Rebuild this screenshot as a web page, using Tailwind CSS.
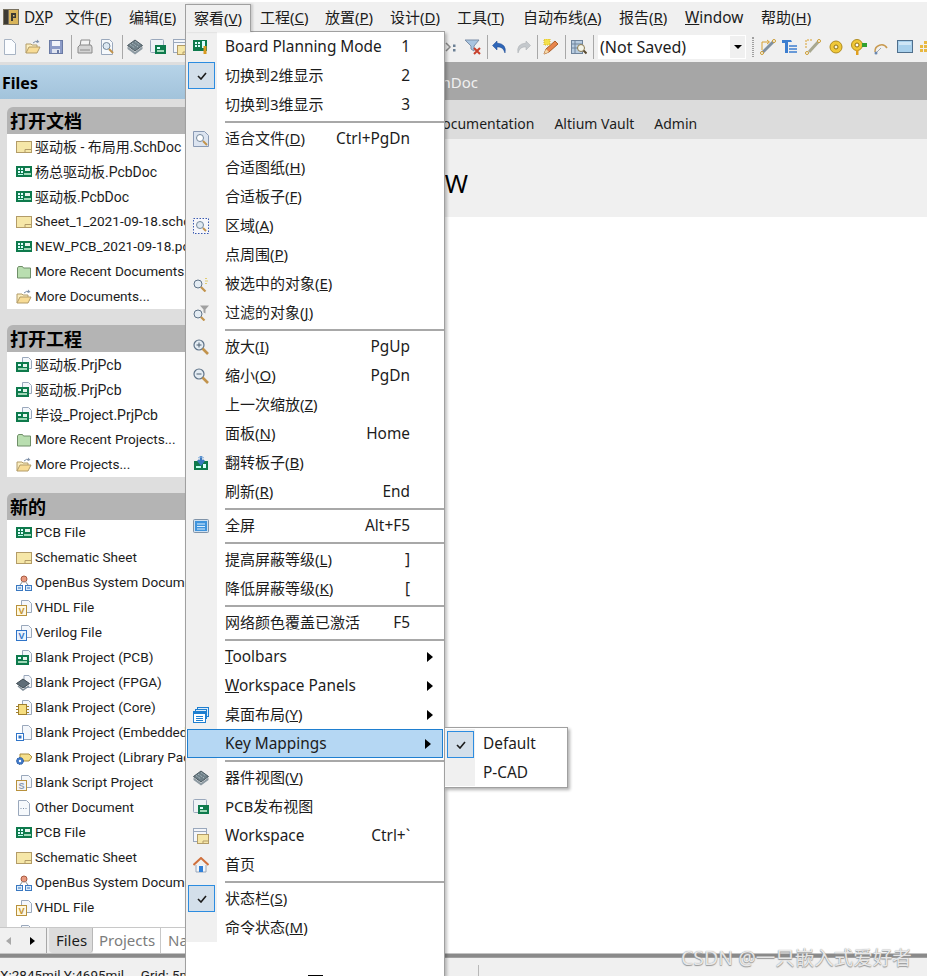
<!DOCTYPE html>
<html lang="zh-CN">
<head>
    <meta charset="UTF-8">
    <title>Altium Designer</title>
    <script src="https://cdn.jsdelivr.net/npm/@tailwindcss/browser@4"></script>
</head>
<body class="bg-white overflow-hidden">
    <!-- icon sprite -->
    <svg class="absolute w-0 h-0" aria-hidden="true">
        <symbol id="dxp" viewBox="0 0 16 16"><rect x="0" y="0" width="16" height="16" fill="#77705f"/><rect x="1" y="1" width="4" height="14" fill="#3c3a34"/><rect x="6" y="1" width="9" height="14" fill="#d8b45a"/><path d="M8 4h5v5H10v3H8z" fill="#3c3a34"/><rect x="10" y="6" width="1.500" height="1.500" fill="#e8c870"/></symbol>
        <symbol id="pcb" viewBox="0 0 16 16"><rect x="0" y="2" width="16" height="11" fill="#0e7a4c"/><rect x="2" y="4" width="2" height="2" fill="#dff"/><rect x="5" y="4" width="2" height="2" fill="#dff"/><rect x="2" y="7" width="2" height="2" fill="#dff"/><rect x="5" y="7" width="2" height="2" fill="#dff"/><rect x="9" y="4" width="5" height="3" fill="#e8f4ee"/><rect x="8" y="9" width="7" height="2" fill="#9fd8b8"/><rect x="2" y="10" width="5" height="1" fill="#bfe"/></symbol>
        <symbol id="sch" viewBox="0 0 16 16"><rect x="0.500" y="2.500" width="15" height="11" fill="#f6e7a8" stroke="#b39c68"/><path d="M9 10.500h6.500M9 10.500v3" stroke="#b39c68" fill="none"/></symbol>
        <symbol id="folder" viewBox="0 0 16 16"><path d="M1.500 14V4l1-1.500h4l1 1.500h7v10z" fill="#b9deb0" stroke="#6f8f68"/></symbol>
        <symbol id="open" viewBox="0 0 16 16"><path d="M1 14V5h5l1 1h5v2" fill="#fbeec0" stroke="#b39c68"/><path d="M1 14l3-6h11l-3 6z" fill="#f8dc96" stroke="#b39c68"/><path d="M8 4q3-3 5-1" stroke="#7d8fa8" fill="none"/><path d="M12 0.500l2.500 2.500-3 1z" fill="#7d8fa8"/></symbol>
        <symbol id="prj" viewBox="0 0 16 16"><path d="M6.500 0.500h6l3 3v8h-9z" fill="#f4f7fb" stroke="#9aa8bc"/><rect x="0" y="5" width="13" height="10" fill="#0e7a4c"/><rect x="2" y="7" width="3" height="2" fill="#dff"/><rect x="7" y="7" width="4" height="3" fill="#e8f4ee"/><rect x="2" y="11" width="9" height="2" fill="#9fd8b8"/></symbol>
        <symbol id="bus" viewBox="0 0 16 16"><circle cx="8" cy="4" r="3" fill="#e89a80" stroke="#a85a40"/><path d="M4 10l3-4M12 10L9 6" stroke="#8a8a8a"/><rect x="0.500" y="10.500" width="6" height="5" fill="#dcecfa" stroke="#3a78c0"/><rect x="9.500" y="10.500" width="6" height="5" fill="#dcecfa" stroke="#3a78c0"/><path d="M2 13h3M11 13h3" stroke="#3a78c0"/></symbol>
        <symbol id="vhdl" viewBox="0 0 16 16"><path d="M5.500 0.500h7l3 3v9h-10z" fill="#f4f7fb" stroke="#9aa8bc"/><rect x="0.500" y="5.500" width="10" height="10" fill="#fff8e0" stroke="#b8913c"/><text x="2.500" y="14" font-size="9" font-weight="700" font-family="Liberation Sans" fill="#c09030">V</text></symbol>
        <symbol id="verilog" viewBox="0 0 16 16"><path d="M5.500 0.500h7l3 3v9h-10z" fill="#f4f7fb" stroke="#9aa8bc"/><rect x="0.500" y="5.500" width="10" height="10" fill="#e8f2fc" stroke="#2f74c8"/><text x="2.500" y="14" font-size="9" font-weight="700" font-family="Liberation Sans" fill="#2f74c8">V</text></symbol>
        <symbol id="fpga" viewBox="0 0 16 16"><path d="M8 0.500h5l2.500 3v9H8z" fill="#f4f7fb" stroke="#9aa8bc"/><path d="M7 4l6.500 4.500L7 13 .5 8.500z" fill="#5f6e78" stroke="#3c4850"/><path d="M2 11l5 4 6-4" fill="none" stroke="#7e8c96" stroke-width="1.500"/></symbol>
        <symbol id="core" viewBox="0 0 16 16"><path d="M6.500 0.500h6l3 3v11h-9z" fill="#f4f7fb" stroke="#9aa8bc"/><rect x="2.500" y="4.500" width="8" height="10" fill="#f6de80" stroke="#a08030"/><path d="M0 6.500h2M0 9.500h2M0 12.500h2M11 6.500h2M11 9.500h2M11 12.500h2" stroke="#a08030"/></symbol>
        <symbol id="embedded" viewBox="0 0 16 16"><path d="M6.500 0.500h6l3 3v11h-9z" fill="#f4f7fb" stroke="#9aa8bc"/><rect x="0.500" y="8.500" width="7" height="7" fill="#fff" stroke="#2f74c8"/><rect x="2.500" y="10.500" width="3" height="3" fill="#2f74c8"/></symbol>
        <symbol id="lib" viewBox="0 0 16 16"><path d="M4 4h9l3 3-3 4H4z" fill="#f6e08c" stroke="#a88a3c"/><circle cx="4" cy="11" r="3.500" fill="#3f78c8" stroke="#2a5a9c" stroke-dasharray="1.500 1"/><circle cx="4" cy="11" r="1.200" fill="#fff"/></symbol>
        <symbol id="script" viewBox="0 0 16 16"><path d="M5.500 0.500h7l3 3v9h-10z" fill="#f4f7fb" stroke="#9aa8bc"/><rect x="0.500" y="5.500" width="10" height="10" fill="#f4f4f4" stroke="#b8913c"/><text x="2.500" y="14" font-size="9" font-weight="700" font-family="Liberation Sans" fill="#8a9ab0">S</text></symbol>
        <symbol id="other" viewBox="0 0 16 16"><path d="M2.500 0.500h8l3 3v12h-11z" fill="#f6f9fc" stroke="#9aa8bc"/><path d="M4.500 8.500h1M7 8.500h1M9.500 8.500h1" stroke="#7d8fa8"/></symbol>
        <symbol id="lens" viewBox="0 0 16 16"><circle cx="6" cy="6" r="5" fill="#e4ecf3" stroke="#5f7388" stroke-width="1.200"/><path d="M9.500 9.500l5.500 5.500" stroke="#c2934c" stroke-width="2.600"/></symbol>
        <symbol id="lensin" viewBox="0 0 16 16"><use href="#lens"/><path d="M3.500 6h5M6 3.500v5" stroke="#4f6073"/></symbol>
        <symbol id="lensout" viewBox="0 0 16 16"><use href="#lens"/><path d="M3.500 6h5" stroke="#4f6073"/></symbol>
        <symbol id="fitdoc" viewBox="0 0 16 16"><path d="M0.500 0.500h11l4 4v11H.5z" fill="#dce4f0" stroke="#8a9ab4"/><circle cx="7" cy="7" r="3.500" fill="#fff" stroke="#74889c"/><path d="M10 10l4 4" stroke="#c2934c" stroke-width="2"/></symbol>
        <symbol id="area" viewBox="0 0 16 16"><rect x="0.500" y="0.500" width="15" height="15" fill="#f6f6fa" stroke="#3a5ab0" stroke-dasharray="1.500 1.500"/><circle cx="7" cy="7" r="3.500" fill="#dfe8f0" stroke="#74889c"/><path d="M10 10l3 3" stroke="#c2934c" stroke-width="2"/></symbol>
        <symbol id="selected" viewBox="0 0 16 16"><circle cx="5" cy="8" r="4" fill="#e4ecf3" stroke="#5f7388"/><path d="M8 11l4.500 4.500" stroke="#c2934c" stroke-width="2.200"/><path d="M12 2.500h2M12 5h3M12 7.500h2" stroke="#e0cc70"/></symbol>
        <symbol id="filter" viewBox="0 0 16 16"><circle cx="5" cy="9" r="4" fill="#e4ecf3" stroke="#5f7388"/><path d="M8 12l3.500 3.500" stroke="#c2934c" stroke-width="2.200"/><path d="M7 0.500h9l-3.500 4v4l-2-1v-3z" fill="#a0a0a0"/></symbol>
        <symbol id="flip" viewBox="0 0 16 16"><rect x="1" y="6" width="14" height="9" fill="#0e7a4c"/><rect x="3" y="11" width="5" height="2" fill="#bfe"/><rect x="10" y="9" width="3" height="4" fill="#dff"/><path d="M8 1v7M5 5l3 4 3-4" fill="none" stroke="#3a78c0" stroke-width="2.400"/><path d="M5 3a4 3 0 0 1 6 0" fill="none" stroke="#8ab4e0"/></symbol>
        <symbol id="screen" viewBox="0 0 16 16"><rect x="0.500" y="1.500" width="15" height="13" rx="1" fill="#cfe0f0" stroke="#7f93a8"/><rect x="2" y="3" width="12" height="10" fill="#3f94dc"/><path d="M4 6h8M4 8.500h8M4 11h8" stroke="#dcefff"/></symbol>
        <symbol id="layout" viewBox="0 0 16 16"><rect x="4.500" y="0.500" width="11" height="9" fill="#dcecfa" stroke="#1f7fd0"/><rect x="2.500" y="2.500" width="11" height="9" fill="#dcecfa" stroke="#1f7fd0"/><rect x="0.500" y="4.500" width="12" height="11" fill="#fff" stroke="#1f7fd0"/><rect x="1" y="5" width="11" height="2" fill="#1f7fd0"/><path d="M3 9.500h7M3 11.500h7M3 13.500h7" stroke="#1f7fd0"/></symbol>
        <symbol id="chip" viewBox="0 0 16 16"><path d="M8 1l7.500 5.500L8 12 .5 6.500z" fill="#6f8088" stroke="#4a5860"/><path d="M5 4l6 4M8 2.500l5 3.500M3 5.500l5 3.500" stroke="#b8c8d0" stroke-dasharray="1 1"/><path d="M.5 7.500L8 13l7.500-5.500v2.500L8 15.500.5 10z" fill="#8d9aa2"/></symbol>
        <symbol id="pcbview" viewBox="0 0 16 16"><rect x="0.500" y="0.500" width="13" height="13" rx="1" fill="#eef2f6" stroke="#9aa8bc"/><rect x="5" y="6" width="11" height="9" fill="#0e7a4c"/><rect x="7" y="8" width="3" height="2" fill="#dff"/><rect x="7" y="11" width="7" height="2" fill="#9fd8b8"/></symbol>
        <symbol id="workspace" viewBox="0 0 16 16"><rect x="0.500" y="0.500" width="13" height="13" fill="#f4f6fa" stroke="#9aa8bc"/><path d="M1 3.500h12" stroke="#9aa8bc"/><rect x="4.500" y="6.500" width="11" height="9" fill="#f6e7a8" stroke="#b39c68"/><path d="M10 13h5M10 13v2" stroke="#b39c68"/></symbol>
        <symbol id="home" viewBox="0 0 16 16"><path d="M3 8v7h10V8" fill="#f2f5f8" stroke="#9aa8bc"/><path d="M0.500 8L8 1l7.500 7" fill="none" stroke="#d0703c" stroke-width="2"/><rect x="6" y="9" width="4" height="6" fill="#2f7fd8"/></symbol>
        <symbol id="planning" viewBox="0 0 16 16"><rect x="0" y="1" width="14" height="11" fill="#0e7a4c"/><rect x="2" y="3" width="2" height="2" fill="#dff"/><rect x="5" y="3" width="2" height="2" fill="#dff"/><rect x="2" y="6" width="2" height="2" fill="#dff"/><rect x="5" y="6" width="2" height="2" fill="#dff"/><rect x="9" y="2" width="3" height="7" fill="#dff"/><path d="M12 7v8" stroke="#d89a20" stroke-width="3"/></symbol>
        <symbol id="newdoc" viewBox="0 0 16 16"><path d="M2.500 0.500h7l4 4v11h-11z" fill="#fbfdff" stroke="#a8b4c4"/></symbol>
        <symbol id="save" viewBox="0 0 16 16"><rect x="1.500" y="1.500" width="13" height="13" fill="#8d9cc8" stroke="#6a7aa4"/><rect x="4" y="2" width="8" height="5" fill="#f2f4fa"/><rect x="4" y="10" width="8" height="4" fill="#dfe4f0"/><rect x="9" y="11" width="2" height="3" fill="#6a7aa4"/></symbol>
        <symbol id="print" viewBox="0 0 16 16"><path d="M4 1h9l-1 6H3z" fill="#f4f4f4" stroke="#8a8a8a"/><path d="M1 8l2-2h11l1 2v6H1z" fill="#d4d4d4" stroke="#8a8a8a"/><path d="M3 11h10" stroke="#8a8a8a"/></symbol>
        <symbol id="preview" viewBox="0 0 16 16"><path d="M2.500 0.500h8l3 3v12h-11z" fill="#f6f9fc" stroke="#9aa8bc"/><circle cx="7.500" cy="7" r="3.500" fill="#dce8f2" stroke="#74889c"/><path d="M10 10l4 4" stroke="#c2934c" stroke-width="2"/></symbol>
        <symbol id="cursor" viewBox="0 0 16 16"><path d="M4 4l4 4-4 4" fill="none" stroke="#8a8a8a" stroke-width="1.500"/><path d="M11 5.500h2.500v2.500H11zM11 10h2.500v2.500H11z" fill="#6a7f94"/></symbol>
        <symbol id="clearfilter" viewBox="0 0 16 16"><path d="M0 1h14l-5 6v5l-3-2V7z" fill="#a8c4e0" stroke="#7d8fa8"/><path d="M9 9l6 6M15 9l-6 6" stroke="#c8402c" stroke-width="2"/></symbol>
        <symbol id="undo" viewBox="0 0 16 16"><path d="M5 2L0.500 6.500 5 11V8q6-1 8 6 2-9-8-10z" fill="#2f66b8" stroke="#1f4a90" stroke-width="0.500"/></symbol>
        <symbol id="redo" viewBox="0 0 16 16"><path d="M11 2l4.500 4.500L11 11V8q-6-1-8 6-2-9 8-10z" fill="#c4c8cc" stroke="#a8acb0" stroke-width="0.500"/></symbol>
        <symbol id="pencil" viewBox="0 0 16 16"><path d="M1 15l2-5 9-8 3 3-9 8z" fill="#e8854c" stroke="#a8602c"/><path d="M1 15l2-5 3 3z" fill="#f4d8a8"/><rect x="1" y="0" width="6" height="6" fill="#f4e04c" stroke="#d8b82c" stroke-dasharray="1 1"/></symbol>
        <symbol id="browse" viewBox="0 0 16 16"><rect x="0.500" y="1.500" width="11" height="13" fill="#b8cce0" stroke="#6f849c"/><path d="M4 2v12M1 5h10M1 9h10" stroke="#6f849c"/><circle cx="10" cy="9" r="3.500" fill="#f4f4e8" stroke="#8a7a50"/><path d="M12.500 11.500l3 3" stroke="#5a4a30" stroke-width="2"/></symbol>
        <symbol id="route" viewBox="0 0 16 16"><path d="M2 14L14 2" stroke="#8090a0" stroke-width="3"/><circle cx="2" cy="14" r="1.500" fill="#fff" stroke="#c89a30"/><circle cx="14" cy="2" r="1.500" fill="#fff" stroke="#c89a30"/><path d="M2 11V3h7M7 1l2.500 2L7 5" fill="none" stroke="#d8a030"/></symbol>
        <symbol id="bus2" viewBox="0 0 16 16"><path d="M0 1h9l1 2H6v11H3V4H0z" fill="#3c7ed0"/><path d="M7 7h8M7 10h8M7 13h8" stroke="#3c7ed0" stroke-width="1.500"/></symbol>
        <symbol id="route2" viewBox="0 0 16 16"><path d="M4 13L14 2" stroke="#a8a890" stroke-width="3"/><circle cx="2" cy="14" r="1.500" fill="#fff" stroke="#c89a30"/><circle cx="14" cy="2" r="1.500" fill="#fff" stroke="#c89a30"/><path d="M1 9V1h7" fill="none" stroke="#d8a030" stroke-dasharray="2 1"/></symbol>
        <symbol id="pad" viewBox="0 0 16 16"><circle cx="8" cy="8" r="6" fill="#f0c838" stroke="#b08c20"/><circle cx="8" cy="8" r="2" fill="#f8f4d8" stroke="#907010"/></symbol>
        <symbol id="via" viewBox="0 0 16 16"><circle cx="6" cy="6" r="5.500" fill="#f0c838" stroke="#b08c20"/><circle cx="6" cy="6" r="2" fill="#fff" stroke="#907010"/><rect x="11" y="4" width="5" height="4" fill="#30a030"/><rect x="5" y="11" width="2.500" height="5" fill="#e0a020"/></symbol>
        <symbol id="arc" viewBox="0 0 16 16"><path d="M2 13A6.500 6.500 0 0 1 14 9" fill="none" stroke="#c89a50" stroke-width="1.500"/><path d="M3 14l5-5" stroke="#a0a8b0"/><circle cx="3" cy="14" r="1.500" fill="#6a88b0"/></symbol>
        <symbol id="fill" viewBox="0 0 16 16"><rect x="0.500" y="1.500" width="15" height="12" fill="#a8d0ec" stroke="#4f6f8c"/><rect x="2" y="3" width="12" height="3" fill="#cfe6f6"/></symbol>
        <symbol id="grid" viewBox="0 0 16 16"><path d="M4 2h3v3H4zM8 2h3v3H8zM0 6h3v3H0zM4 6h3v3H4zM8 6h3v3H8zM0 10h3v3H0zM4 10h3v3H4zM8 10h3v3H8z" fill="#e8b840"/></symbol>
    </svg>

    <div class="relative flex h-[976px] w-[927px] flex-col overflow-hidden font-['Noto_Sans','Noto_Sans_CJK_SC',sans-serif] text-[#1c1c1c]">
        <!-- menu bar -->
        <div class="flex h-[31px] items-center bg-[#f0f0f0] border-t-2 border-white text-[15.400px] whitespace-nowrap">
            <svg class="ml-[3px] mr-[5px] w-4 h-4"><use href="#dxp"/></svg>
            <div id="menubar" class="flex pt-[2px]"></div>
        </div>

        <!-- toolbar -->
        <div id="toolbar" class="flex h-[31px] items-center bg-[#f0f0f0]"></div>

        <div class="flex min-h-0 flex-1">
            <!-- files panel -->
            <aside class="flex w-[186px] flex-col overflow-hidden bg-[#dedede] pt-[3px] font-['Roboto','Noto_Sans_CJK_SC',sans-serif]">
                <div class="flex h-[34px] items-center bg-gradient-to-b from-[#b6d3e8] to-[#a2c3db] pl-[2px] pt-[2px] font-['Noto_Sans',sans-serif] text-base font-bold text-black">Files</div>
                <div id="files" class="min-h-0 flex-1 overflow-hidden pt-2 pl-[7px]"></div>
                <div class="flex h-[26px] shrink-0 items-stretch border-t border-[#c8c8c8] bg-[#f0f0f0] font-['Noto_Sans',sans-serif] text-[15px] whitespace-nowrap">
                    <div class="flex w-[47px] shrink-0 items-center justify-between border-r border-[#a8a8a8] pl-[6px] pr-[11px]">
                        <span class="h-0 w-0 border-y-[4px] border-r-[5px] border-y-transparent border-r-[#a8a8a8]"></span>
                        <span class="h-0 w-0 border-y-[4px] border-l-[5px] border-y-transparent border-l-black"></span>
                    </div>
                    <div class="ml-[2px] flex w-[44px] shrink-0 items-center justify-center rounded-b-sm border-r border-[#b8b8b8] bg-[#dcdcdc] pl-[2px]">Files</div>
                    <div class="flex w-[68px] shrink-0 items-center justify-center border-r border-[#c8c8c8] bg-white pl-px text-[#7c7c7c]">Projects</div>
                    <div class="flex shrink-0 items-center bg-white pl-[7px] pr-4 text-[#7c7c7c]">Navigator</div>
                </div>
            </aside>

            <!-- home page -->
            <main class="flex min-w-0 flex-1 flex-col bg-white whitespace-nowrap">
                <div class="flex h-[38px] items-center justify-end bg-[#a6a6a6] pr-[449px] pt-[3px] text-[15px] text-[#f0f0f0]">驱动板 - 布局用.SchDoc</div>
                <div class="flex h-[39px] items-center bg-[#dcdcdc] pl-[246px] pt-2 text-sm">
                    <span>Documentation</span>
                    <span class="ml-5">Altium Vault</span>
                    <span class="ml-5">Admin</span>
                </div>
                <div class="flex h-[78px] items-center justify-end bg-[#f0f0f0] pr-[459px] pt-[11px] text-[25px] text-black">OVERVIEW</div>
            </main>
        </div>

        <div class="h-[5px] border-t border-b border-t-[#c4c4c4] border-b-[#a0a0a0] bg-[#8a8a8a]"></div>
        <div class="flex h-[18px] bg-[#f0f0f0] pt-[7px] font-['Roboto',sans-serif] text-[13.500px] whitespace-nowrap">
            <span class="w-[479px] border-r border-[#b8b8b8]">X:2845mil Y:4695mil&nbsp;&nbsp;&nbsp;&nbsp; Grid: 5mil</span>
        </div>

        <!-- open view menu -->
        <div class="absolute left-[185px] top-[4px] z-20 flex h-[28px] w-[66px] justify-center border border-b-0 border-[#a0a0a0] bg-[#f0f0f0] pt-[2px] text-[15px] shadow-[2px_0_2px_rgba(0,0,0,0.15)]">察看(<u>V</u>)</div>
        <div id="viewMenu" class="absolute left-[185px] top-[31px] z-10 flex h-[945px] w-[260px] flex-col border border-b-0 border-[#a0a0a0] bg-white text-[15.400px] whitespace-nowrap shadow-[2px_2px_3px_rgba(0,0,0,0.25)]">
            <div class="absolute bottom-0 left-[122px] h-px w-[15px] bg-black"></div>
        </div>

        <!-- key mappings submenu -->
        <div class="absolute left-[444px] top-[727px] z-20 flex h-[61px] w-[124px] flex-col border border-[#a0a0a0] bg-white py-px text-[15.400px] shadow-[2px_2px_3px_rgba(0,0,0,0.3)]">
            <div class="flex h-[29px] items-center bg-gradient-to-r from-[#f0f0f0] from-[30px] to-white to-[30px]">
                <span class="ml-[2px] mt-[2px] flex h-[27px] w-[27px] items-center justify-center border border-[#2c8ce0] bg-[#d3dfea]"><svg width="10" height="8" viewBox="0 0 10 8"><path d="M1 4l3 3 5-6" fill="none" stroke="#1c1c1c" stroke-width="1.600"/></svg></span>
                <span class="ml-[9px]">Default</span>
            </div>
            <div class="flex h-[29px] items-center bg-gradient-to-r from-[#f0f0f0] from-[30px] to-white to-[30px]">
                <span class="ml-[38px] mt-[2px]">P-CAD</span>
            </div>
        </div>

        <div class="absolute left-[681px] top-[946px] z-30 text-[19.500px] leading-6 whitespace-nowrap text-white/80 [text-shadow:0_0_1px_#808080,0_1px_1px_#999]">CSDN @一只嵌入式爱好者</div>
    </div>

    <script>
        const check = '<span class="flex h-[27px] w-[27px] items-center justify-center border border-[#2c8ce0] bg-[#d3dfea]"><svg width="10" height="8" viewBox="0 0 10 8"><path d="M1 4l3 3 5-6" fill="none" stroke="#1c1c1c" stroke-width="1.600"/></svg></span>';
        // chinese labels sit a bit smaller than the latin ones in the reference
        const hasCjk = text => /[^\x00-\x7f]/.test(text);

        // menu bar labels, widths read off the screenshot
        const menuBar = [
            ['D<u>X</u>P', 'w-[41px]'], ['文件(<u>F</u>)', 'w-[64px]'], ['编辑(<u>E</u>)', 'w-[64px]'], ['', 'w-[67px]'],
            ['工程(<u>C</u>)', 'w-[65px]'], ['放置(<u>P</u>)', 'w-[65px]'], ['设计(<u>D</u>)', 'w-[67px]'], ['工具(<u>T</u>)', 'w-[66px]'],
            ['自动布线(<u>A</u>)', 'w-[96px]'], ['报告(<u>R</u>)', 'w-[66px]'], ['<u>W</u>indow', 'w-[76px]'], ['帮助(<u>H</u>)', 'w-[66px]']
        ];
        document.getElementById('menubar').innerHTML = menuBar.map(([label, width]) =>
            `<span class="${width} ${hasCjk(label) ? 'text-[15px]' : ''}">${label}</span>`).join('');

        // [icon, left gap]; null draws a divider with its own gap
        const toolItems = [
            ['newdoc', 2], ['open', 7], ['save', 7], [null, 7], ['print', 5], ['preview', 6], [null, 7], ['chip', 4], ['pcbview', 7], ['workspace', 7],
            ['cursor', 253], ['clearfilter', 7], [null, 6], ['undo', 4], ['redo', 7], [null, 6], ['pencil', 5], [null, 6], ['browse', 5], [null, 6]
        ];
        const rightIcons = [['route', 6], ['bus2', 6], ['route2', 7], ['pad', 7], ['via', 7], ['arc', 6], ['fill', 8], ['grid', 7]];
        const toolHtml = items => items.map(([id, gap]) => id
            ? `<svg class="w-4 h-4 shrink-0" style="margin-left:${gap}px"><use href="#${id}"/></svg>`
            : `<span class="h-[24px] w-px shrink-0 bg-[#a8a8a8]" style="margin-left:${gap}px"></span>`).join('');
        document.getElementById('toolbar').innerHTML = toolHtml(toolItems)
            + '<div class="ml-1 flex h-[24px] w-[148px] shrink-0 items-center justify-between border border-white bg-white pl-px text-base">(Not Saved)<span class="flex h-full w-[15px] items-center justify-center bg-[#f0f0f0]"><span class="h-0 w-0 border-x-[4px] border-t-[4px] border-x-transparent border-t-black"></span></span></div>'
            + '<span class="ml-[6px] h-[20px] w-[2px] shrink-0 border-x border-dotted border-[#a0a0a0]"></span>'
            + toolHtml(rightIcons);

        const sections = [
            ['打开文档', [['sch', '驱动板 - 布局用.SchDoc'], ['pcb', '杨总驱动板.PcbDoc'], ['pcb', '驱动板.PcbDoc'], ['sch', 'Sheet_1_2021-09-18.schdoc'], ['pcb', 'NEW_PCB_2021-09-18.pcbdoc'], ['folder', 'More Recent Documents...'], ['open', 'More Documents...']], 'mb-4'],
            ['打开工程', [['prj', '驱动板.PrjPcb'], ['prj', '驱动板.PrjPcb'], ['prj', '毕设_Project.PrjPcb'], ['folder', 'More Recent Projects...'], ['open', 'More Projects...']], 'mb-4'],
            ['新的', [['pcb', 'PCB File'], ['sch', 'Schematic Sheet'], ['bus', 'OpenBus System Document'], ['vhdl', 'VHDL File'], ['verilog', 'Verilog File'], ['prj', 'Blank Project (PCB)'], ['fpga', 'Blank Project (FPGA)'], ['core', 'Blank Project (Core)'], ['embedded', 'Blank Project (Embedded)'], ['lib', 'Blank Project (Library Package)'], ['script', 'Blank Script Project'], ['other', 'Other Document'], ['pcb', 'PCB File'], ['sch', 'Schematic Sheet'], ['bus', 'OpenBus System Document'], ['vhdl', 'VHDL File'], ['verilog', 'Verilog File']], 'mb-0']
        ];
        document.getElementById('files').innerHTML = sections.map(([title, rows, spacing]) => `
            <section class="${spacing}">
                <h2 class="flex h-[27px] items-center rounded-tl-md bg-[#b4b4b4] pl-[3px] font-['Noto_Sans','Noto_Sans_CJK_SC',sans-serif] text-lg font-bold text-black">${title}</h2>
                <div class="bg-white">
                    ${rows.map(([icon, label]) => `
                        <div class="flex h-[25px] items-center gap-[3px] pl-[9px] whitespace-nowrap ${hasCjk(label) ? 'text-sm' : 'text-[13.600px]'}">
                            <svg class="w-4 h-4 shrink-0"><use href="#${icon}"/></svg><span>${label}</span>
                        </div>`).join('')}
                </div>
            </section>`).join('');

        const arrow = '<span class="ml-auto mr-[11px] h-0 w-0 border-y-[5px] border-l-[6px] border-y-transparent border-l-black"></span>';
        const menuRows = [
            { icon: 'planning', label: 'Board Planning Mode', key: '1' },
            { check: true, label: '切换到2维显示', key: '2' },
            { label: '切换到3维显示', key: '3' },
            null,
            { icon: 'fitdoc', label: '适合文件(<u>D</u>)', key: 'Ctrl+PgDn' },
            { label: '合适图纸(<u>H</u>)' },
            { label: '合适板子(<u>F</u>)' },
            { icon: 'area', label: '区域(<u>A</u>)' },
            { label: '点周围(<u>P</u>)' },
            { icon: 'selected', label: '被选中的对象(<u>E</u>)' },
            { icon: 'filter', label: '过滤的对象(<u>J</u>)' },
            null,
            { icon: 'lensin', label: '放大(<u>I</u>)', key: 'PgUp' },
            { icon: 'lensout', label: '缩小(<u>O</u>)', key: 'PgDn' },
            { label: '上一次缩放(<u>Z</u>)' },
            { label: '面板(<u>N</u>)', key: 'Home' },
            { icon: 'flip', label: '翻转板子(<u>B</u>)' },
            { label: '刷新(<u>R</u>)', key: 'End' },
            null,
            { icon: 'screen', label: '全屏', key: 'Alt+F5' },
            null,
            { label: '提高屏蔽等级(<u>L</u>)', key: ']' },
            { label: '降低屏蔽等级(<u>K</u>)', key: '[' },
            null,
            { label: '网络颜色覆盖已激活', key: 'F5' },
            null,
            { label: '<u>T</u>oolbars', more: true },
            { label: '<u>W</u>orkspace Panels', more: true },
            { icon: 'layout', label: '桌面布局(<u>Y</u>)', more: true },
            { label: 'Key Mappings', more: true, active: true },
            null,
            { icon: 'chip', label: '器件视图(<u>V</u>)' },
            { icon: 'pcbview', label: 'PCB发布视图' },
            { icon: 'workspace', label: 'Workspace', key: 'Ctrl+`' },
            { icon: 'home', label: '首页' },
            null,
            { check: true, label: '状态栏(<u>S</u>)' },
            { label: '命令状态(<u>M</u>)' }
        ];
        document.getElementById('viewMenu').insertAdjacentHTML('afterbegin', menuRows.map(row => {
            if (!row) {
                return '<div class="flex h-[5px] shrink-0 items-center"><span class="h-full w-[31px] bg-[#f0f0f0]"></span><span class="ml-2 h-[2px] flex-1 bg-[#a8a8a8]"></span></div>';
            }
            const cell = row.check ? check : row.icon ? `<svg class="mr-[2px] w-4 h-4"><use href="#${row.icon}"/></svg>` : '';
            const rowClass = row.active ? 'mx-px border border-[#1f7fd0] bg-[#b5d7f3]' : '';
            const cellClass = row.active ? 'w-[29px]' : 'w-[31px] bg-[#f0f0f0]';
            return `<div class="flex h-[29px] shrink-0 items-center ${rowClass}">
                <span class="flex h-full ${cellClass} shrink-0 items-center justify-center">${cell}</span>
                <span class="ml-2 ${hasCjk(row.label) ? 'text-[15px]' : ''}">${row.label}</span>
                ${row.key ? `<span class="ml-auto mr-[34px]">${row.key}</span>` : ''}
                ${row.more ? arrow : ''}
            </div>`;
        }).join(''));
    </script>
</body>
</html>
